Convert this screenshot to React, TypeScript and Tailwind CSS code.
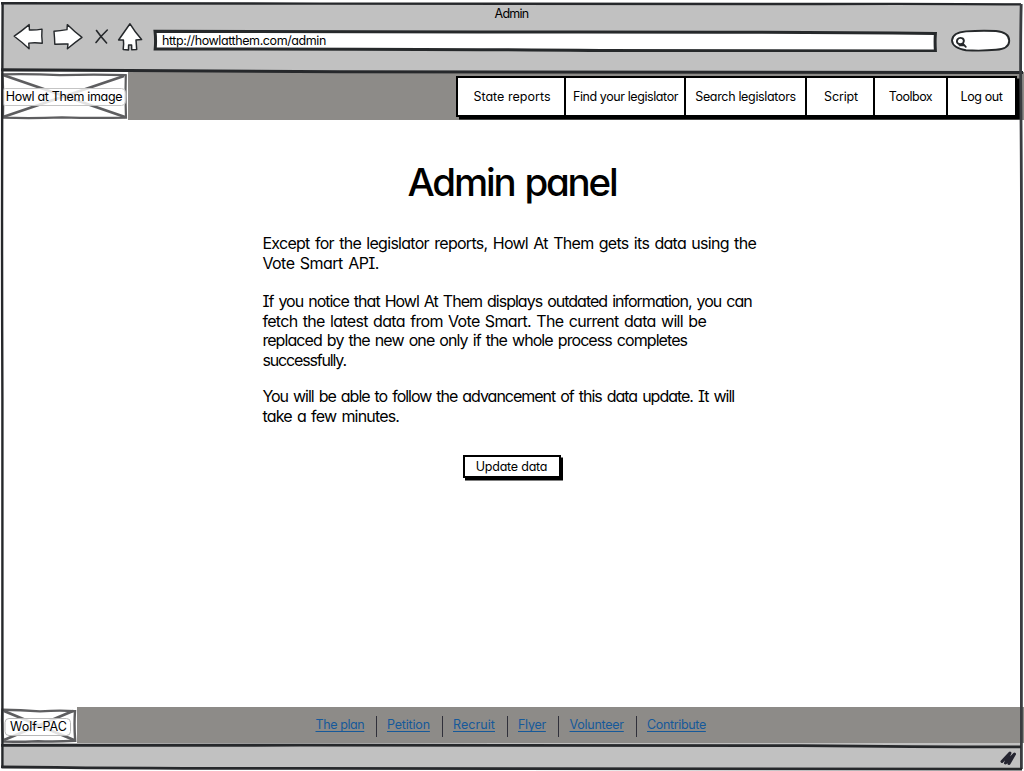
type Item = { label: string; className: string };

const navItems: Item[] = [
  { label: "State reports", className: "w-[106px] pl-0.5 tracking-[0.03px]" },
  { label: "Find your legislator", className: "w-[120px] border-l-2 pl-px tracking-[-0.41px]" },
  { label: "Search legislators", className: "w-[121px] border-l-2 tracking-[-0.33px]" },
  { label: "Script", className: "w-[68px] border-l-2 pl-0.5 tracking-[-0.17px]" },
  { label: "Toolbox", className: "w-[73px] border-l-2 tracking-[-0.48px]" },
  { label: "Log out", className: "w-[69px] border-l-2 tracking-[-0.42px]" },
];

const footerItems: Item[] = [
  { label: "The plan", className: "w-[61px] tracking-[-0.4px]" },
  { label: "Petition", className: "w-[66px] pl-[10.5px] tracking-[-0.18px]" },
  { label: "Recruit", className: "w-[65px] pl-[10.5px] tracking-[0.07px]" },
  { label: "Flyer", className: "w-[51px] pl-[10.5px] tracking-[-0.28px]" },
  { label: "Volunteer", className: "w-[78px] pl-[11px] tracking-[-0.25px]" },
  { label: "Contribute", className: "pl-[10.5px] tracking-[-0.35px]" },
];

const paragraphs: { className: string; lines: Item[] }[] = [
  {
    className: "mb-[18.6px]",
    lines: [
      {
        label: "Except for the legislator reports, Howl At Them gets its data using the",
        className: "tracking-[-0.71px]",
      },
      { label: "Vote Smart API.", className: "tracking-[-0.55px]" },
    ],
  },
  {
    className: "mb-[16.5px]",
    lines: [
      {
        label: "If you notice that Howl At Them displays outdated information, you can",
        className: "tracking-[-0.99px]",
      },
      {
        label: "fetch the latest data from Vote Smart. The current data will be",
        className: "tracking-[-0.68px]",
      },
      {
        label: "replaced by the new one only if the whole process completes",
        className: "tracking-[-0.93px]",
      },
      { label: "successfully.", className: "tracking-[-1.15px]" },
    ],
  },
  {
    className: "",
    lines: [
      {
        label: "You will be able to follow the advancement of this data update. It will",
        className: "tracking-[-1.01px]",
      },
      { label: "take a few minutes.", className: "tracking-[-0.82px]" },
    ],
  },
];

function Toolbar() {
  return (
    <div className="flex items-start pl-3">
      <svg className="h-7 w-8" viewBox="12 22 32 28" fill="#fff" stroke="#25282b" strokeWidth="1.4" strokeLinejoin="round">
        <path d="M14.2 36.2 Q21 31.5 29.2 24.6 L29.4 30 Q36 30.2 42 29.1 Q41.4 36 42.3 43.2 Q35 42.4 28.8 43.1 L29.1 48.8 Q22 42 14.2 36.2Z" />
      </svg>
      <svg className="ml-2 h-7 w-8" viewBox="52 22 32 28" fill="#fff" stroke="#25282b" strokeWidth="1.4" strokeLinejoin="round">
        <path d="M54 31.2 Q60 31 67 29.6 L67.3 24.6 Q74 31.4 82 37.4 Q75 42.4 67.4 48.8 L68 44 Q61 43.8 54.8 44.3 Q54.6 37.4 54 31.2Z" />
      </svg>
      <svg className="ml-2.5 h-7 w-4" viewBox="94 22 16 28" fill="none" stroke="#25282b" strokeWidth="1.6" strokeLinecap="round">
        <path d="M96.5 30.5 Q101 37 106.6 43 M107.3 30 Q101 36 96 42.5" />
      </svg>
      <svg className="ml-1.5 h-[30px] w-7" viewBox="116 22 28 30" fill="#fff" stroke="#25282b" strokeWidth="1.5" strokeLinejoin="round">
        <path d="M130 23.8 Q135 32 141.6 39.6 L136 40 Q136.4 45 136.7 49.6 L131.7 49.8 L131.6 45 L128.6 45 L128.5 49.9 L123.2 49.4 Q124 44 123.4 40 L118.6 40 Q125 31 130 23.8Z" />
      </svg>
      <div className="relative ml-2 mt-1.5 flex h-6 w-[786px] items-center pl-2.5 pt-0.5">
        <svg className="absolute inset-0 h-6 w-[786px]" viewBox="152 28 786 24" fill="#fff" stroke="#26292b" strokeWidth="3">
          <path d="M155 31.2 Q320 31.8 480 32 Q720 31.5 935.4 33.4 Q934.8 42 935.4 51 Q780 50.8 600 50.6 Q420 48.8 155.2 49 Q156 40 155 31.2Z" />
        </svg>
        <span className="relative tracking-[-0.41px]">http://howlatthem.com/admin</span>
      </div>
      <svg className="ml-3 mt-1.5 h-6 w-[62px]" viewBox="950 28 62 24" fill="#fff" stroke="#26292b" strokeWidth="1.9">
        <path d="M966 31.4 Q981 30.2 996 31 Q1009.5 32.5 1009.2 41 Q1009 49 996 49.8 Q981 51.2 966 50.2 Q952.5 48 952 40.5 Q952.5 32.5 966 31.4Z" />
        <path d="M957.2 39.5 Q959.3 37.2 962.5 38.3 Q965 40.4 963 43.2 Q960.2 45.4 957.4 43 Q956 41 958.2 38.6 M962.6 43.4 L965.8 46.8 M959.5 45.4 L964 45.2" fill="none" strokeWidth="1.8" strokeLinecap="round" />
      </svg>
    </div>
  );
}

function LogoPlaceholder() {
  return (
    <div className="relative flex h-12 w-32 items-center justify-center bg-white pt-0.5">
      <svg className="absolute inset-0 h-12 w-32" viewBox="0 72 128 48" fill="none" stroke="#5e5e60" strokeWidth="2.2">
        <path d="M3 75 L125 117 M124 76 L3 117" strokeWidth="2.8" />
        <path d="M2.5 74.3 Q30 73.5 60 75.2 Q95 74 125.8 75.2 Q125 95 126 117.6 Q95 118.4 62 117.4 Q30 118.6 3 117.6 Q4 96 2.5 74.3Z" />
        <rect x="1.5" y="88.5" width="124" height="17" rx="4" fill="#fff" fillOpacity="0.82" stroke="#c4c4c4" strokeWidth="1" />
      </svg>
      <span className="relative tracking-[-0.33px]">Howl at Them image</span>
    </div>
  );
}

function WolfPlaceholder() {
  return (
    <div className="relative flex h-9 w-[77px] items-center justify-center bg-white pt-1">
      <svg className="absolute inset-0 h-9 w-[77px]" viewBox="0 707 77 36" fill="none" stroke="#5e5e60" strokeWidth="2.4">
        <path d="M4 711 L74 740 M73 711 L4 740" strokeWidth="2.8" />
        <path d="M2.4 709.8 Q20 709.8 40 711.4 Q60 710 75 711.2 Q74 725 75.2 740.8 Q55 742 38 741.2 Q18 742 3.2 741.6 Q1.5 724 2.4 709.8Z" />
        <rect x="5" y="718.5" width="65.5" height="17" rx="4" fill="#fff" fillOpacity="0.82" stroke="#b8b8b8" strokeWidth="1" />
      </svg>
      <span className="relative tracking-[0.05px]">Wolf-PAC</span>
    </div>
  );
}

function SketchedFrame() {
  return (
    <svg className="pointer-events-none absolute inset-0 h-[771px] w-[1024px]" viewBox="0 0 1024 771" fill="none" stroke="#26282b" strokeWidth="2.4">
      <path d="M1 3.2 Q160 2.8 320 3.6 Q620 3.2 820 4 Q940 3.6 1021 4.4" />
      <path d="M1 69.8 Q180 70.2 340 71.8 Q700 71.2 1023 72.4" strokeWidth="3" />
      <path d="M2.6 3 Q1.6 200 2.4 400 Q2 600 2.4 768" />
      <path d="M1021.2 4 Q1020.6 30 1020.6 72 Q1022 200 1021.4 420 Q1021 600 1021.4 769" strokeWidth="2.8" stroke="#3a3c40" />
      <path d="M1 745.4 Q150 745.8 300 745.2 Q600 746 800 745.6 Q940 747 1021 746.8" strokeWidth="2.8" />
      <path d="M1 766.8 Q120 768.4 300 768.4 Q600 769.6 1022 769.2" strokeWidth="2.8" />
      <path d="M1002 761.5 L1010 753 L1005.5 763 L1014.5 754 L1009 763.5" stroke="#242430" strokeWidth="3" strokeLinejoin="round" strokeLinecap="round" />
    </svg>
  );
}

export default function App() {
  return (
    <div className="relative flex h-[771px] w-[1024px] flex-col overflow-hidden bg-white font-['Inter','Open_Sans',sans-serif] text-[12.5px] leading-4 text-black [font-feature-settings:'cv11','cv08']">
      <header className="ml-0.5 mr-[3px] mt-[3px] h-[69px] bg-[#c1c1c1]">
        <div className="-ml-0.5 pt-[3px]">
          <h2 className="h-4 pl-0.5 text-center tracking-[-0.75px]">Admin</h2>
          <Toolbar />
        </div>
      </header>

      <nav className="flex h-12 shrink-0 items-start bg-[#8d8b88]">
        <LogoPlaceholder />
        <div className="ml-auto mr-[7px] mt-1 flex h-[41px] border-2 border-black bg-white shadow-[3px_2.5px_0_0_#000] [&>a]:border-black">
          {navItems.map((item) => (
            <a key={item.label} href="#" className={`flex items-center justify-center whitespace-nowrap ${item.className}`}>
              {item.label}
            </a>
          ))}
        </div>
      </nav>

      <main className="flex flex-1 flex-col">
        <h1 className="mt-[42px] h-10 text-center text-[38.5px] font-medium leading-10 tracking-[-2.2px] [word-spacing:2px]">
          Admin panel
        </h1>
        <div className="ml-[262.4px] mt-[32.3px] w-[500px] text-base leading-[19.6px] [word-spacing:1.5px]">
          {paragraphs.map((paragraph) => (
            <p key={paragraph.lines[0].label} className={paragraph.className}>
              {paragraph.lines.map((line) => (
                <span key={line.label} className={`block whitespace-nowrap ${line.className}`}>
                  {line.label}
                </span>
              ))}
            </p>
          ))}
        </div>
        <button className="ml-[463px] mt-[29px] flex h-[23px] w-[98px] items-center justify-center border-2 border-black bg-white pr-px tracking-[-0.23px] shadow-[2px_2.5px_0_0_#000]">
          Update data
        </button>
      </main>

      <footer className="flex h-9 shrink-0 bg-[#8d8b88]">
        <WolfPlaceholder />
        <ul className="ml-[238.5px] mt-[9px] flex h-[21px] divide-x-[1.5px] divide-[#30303a]">
          {footerItems.map((item) => (
            <li key={item.label} className={`flex items-center whitespace-nowrap pb-[3px] ${item.className}`}>
              <a
                href="#"
                className="text-[#16599a] underline decoration-1 underline-offset-2 [text-decoration-skip-ink:none]"
              >
                {item.label}
              </a>
            </li>
          ))}
        </ul>
      </footer>

      <div className="mb-0.5 ml-0.5 mr-[3px] h-[26px] shrink-0 bg-[#c1c1c1]" />
      <SketchedFrame />
    </div>
  );
}
